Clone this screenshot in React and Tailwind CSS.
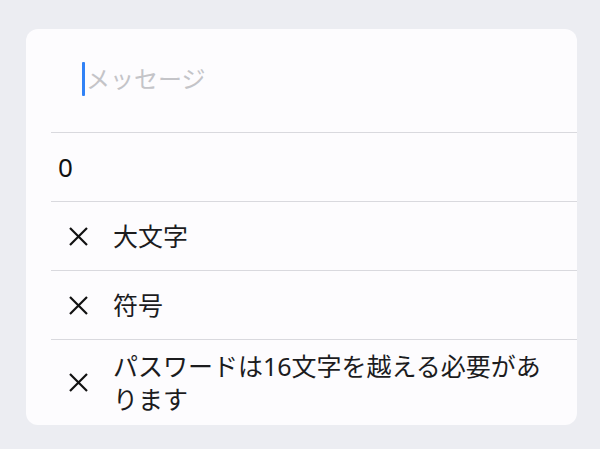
import React from "react";

const font = { fontFamily: '"Noto Sans", "Noto Sans CJK JP", sans-serif' };

function XIcon() {
  return (
    <svg width="21" height="21" viewBox="0 0 21 21" className="shrink-0">
      <path d="M2 2 L19 19 M19 2 L2 19" stroke="#111111" strokeWidth="2.2" strokeLinecap="butt" fill="none" />
    </svg>
  );
}

function Row({ children, last }) {
  return (
    <div className={`flex items-center border-t border-[#d9d9de] pl-[17px] pr-[26px] ${last ? "h-[86px]" : "h-[69px]"}`}>
      <XIcon />
      <div className="ml-[24px] text-[25px] leading-[33px] text-[#1c1c1e]">{children}</div>
    </div>
  );
}

export default function App() {
  return (
    <div className="w-[600px] h-[449px] bg-[#ecedf2] pt-[29px] pl-[26px]" style={font}>
      <div className="w-[551px] h-[396px] rounded-[12px] bg-[#fdfcfe] overflow-hidden">
        <div className="h-[103px] flex items-center pl-[56px] pb-[4px]">
          <div className="w-[3px] h-[34px] rounded-[1px] bg-[#3182f6]" />
          <div className="ml-[1px] text-[24px] text-[#c4c4c8] leading-[33px]">メッセージ</div>
        </div>
        <div className="ml-[25px]">
          <div className="h-[69px] flex items-center border-t border-[#d9d9de] pl-[7px] text-[26px] text-[#111111]">0</div>
          <Row>大文字</Row>
          <Row>符号</Row>
          <Row last>パスワードは16文字を越える必要があります</Row>
        </div>
      </div>
    </div>
  );
}
